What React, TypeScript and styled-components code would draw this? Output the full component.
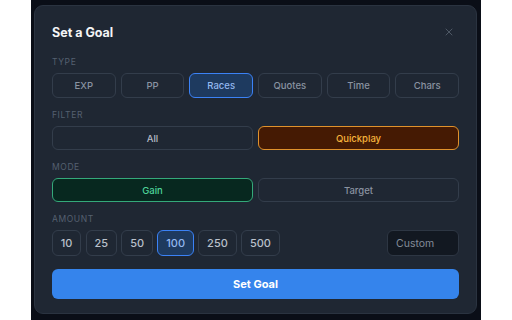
import React, {useState} from 'react';
import styled, {createGlobalStyle, css} from 'styled-components';
import {X} from 'lucide-react';

const GlobalStyle = createGlobalStyle`
  html, body {
    margin: 0;
    padding: 0;
    background: #ffffff;
    font-family: Inter, "Noto Sans", sans-serif;
  }
`;

const Page = styled.div`
  width: 512px;
  height: 320px;
  display: flex;
  justify-content: center;
`;

const Overlay = styled.div`
  width: 450px;
  height: 320px;
  background: #0a0e17;
  padding: 5px 4px 0 3px;
  box-sizing: border-box;
`;

const Modal = styled.div`
  height: 309px;
  background: #1f2733;
  border: 1px solid #2a3340;
  border-radius: 9px;
  box-sizing: border-box;
  padding: 16px 17px 0 17px;
  display: flex;
  flex-direction: column;
`;

const Header = styled.div`
  display: flex;
  justify-content: space-between;
  align-items: center;
  height: 20px;
  margin-bottom: 15px;
`;

const Title = styled.h1`
  margin: 0;
  font-size: 12.5px;
  font-weight: 700;
  color: #f3f4f6;
`;

const Close = styled.button`
  background: none;
  border: none;
  padding: 0;
  color: #5b6472;
  display: flex;
  margin-right: 4px;
`;

const Label = styled.div`
  font-size: 8.5px;
  letter-spacing: 0.6px;
  color: #556070;
  text-transform: uppercase;
  height: 10px;
  line-height: 10px;
  margin-bottom: 6px;
`;

const Section = styled.div`
  margin-bottom: 12px;
`;

const Grid = styled.div<{$cols: number}>`
  display: grid;
  grid-template-columns: repeat(${p => p.$cols}, 1fr);
  gap: 5px;
`;

type Tone = 'blue' | 'amber' | 'green';

const tones: Record<Tone, ReturnType<typeof css>> = {
  blue: css`
    background: #1e3a5f;
    border-color: #3b82f6;
    color: #93b8f0;
  `,
  amber: css`
    background: #451a03;
    border-color: #e0922c;
    color: #f5b43c;
  `,
  green: css`
    background: #07281f;
    border-color: #34a97a;
    color: #4ed39a;
  `,
};

const Option = styled.button<{$tone?: Tone; $h?: number; $bright?: boolean}>`
  height: ${p => p.$h || 25}px;
  border: 1.5px solid #333d4b;
  border-radius: 6px;
  background: transparent;
  color: ${p => p.$bright ? '#b4bbc6' : '#8a93a1'};
  font-family: inherit;
  font-size: 9.5px;
  font-weight: 500;
  padding: 0 8px;
  box-sizing: border-box;
  ${p => p.$tone && tones[p.$tone]}
`;

const AmountRow = styled.div`
  display: flex;
  align-items: center;
  gap: 4.5px;
`;

const AmountBtn = styled(Option)`
  font-size: 11px;
  color: #b9c0cb;
  height: 26px;
  padding: 0 7.8px;
  ${p => p.$tone && tones[p.$tone]}
`;

const CustomInput = styled.input`
  margin-left: auto;
  width: 72px;
  height: 26px;
  box-sizing: border-box;
  background: #121821;
  border: 1.5px solid #2d3643;
  border-radius: 6px;
  color: #e5e7eb;
  font-family: inherit;
  font-size: 10.5px;
  padding: 0 8px;
  outline: none;
  &::placeholder {
    color: #838c99;
  }
`;

const Submit = styled.button`
  margin-top: 1px;
  height: 30px;
  border: none;
  border-radius: 6px;
  background: #3584ec;
  color: #ffffff;
  font-family: inherit;
  font-size: 11px;
  font-weight: 700;
`;

const types = ['EXP', 'PP', 'Races', 'Quotes', 'Time', 'Chars'];
const amounts = [10, 25, 50, 100, 250, 500];

const App = () => {
  const [type, setType] = useState('Races');
  const [filter, setFilter] = useState('Quickplay');
  const [mode, setMode] = useState('Gain');
  const [amount, setAmount] = useState(100);

  return <>
    <GlobalStyle/>
    <Page>
      <Overlay>
        <Modal>
          <Header>
            <Title>Set a Goal</Title>
            <Close><X size={12} strokeWidth={1.6}/></Close>
          </Header>

          <Section>
            <Label>Type</Label>
            <Grid $cols={6}>
              {types.map(t =>
                <Option key={t} $tone={t === type ? 'blue' : undefined} onClick={() => setType(t)}>{t}</Option>
              )}
            </Grid>
          </Section>

          <Section>
            <Label>Filter</Label>
            <Grid $cols={2}>
              {['All', 'Quickplay'].map(f =>
                <Option key={f} $h={24} $bright={f === 'All'} $tone={f === filter ? 'amber' : undefined}
                        onClick={() => setFilter(f)}>{f}</Option>
              )}
            </Grid>
          </Section>

          <Section>
            <Label>Mode</Label>
            <Grid $cols={2}>
              {['Gain', 'Target'].map(m =>
                <Option key={m} $h={24} $tone={m === mode ? 'green' : undefined} onClick={() => setMode(m)}>{m}</Option>
              )}
            </Grid>
          </Section>

          <Section>
            <Label>Amount</Label>
            <AmountRow>
              {amounts.map(a =>
                <AmountBtn key={a} $tone={a === amount ? 'blue' : undefined} onClick={() => setAmount(a)}>{a}</AmountBtn>
              )}
              <CustomInput placeholder="Custom"/>
            </AmountRow>
          </Section>

          <Submit>Set Goal</Submit>
        </Modal>
      </Overlay>
    </Page>
  </>;
};

export default App;
